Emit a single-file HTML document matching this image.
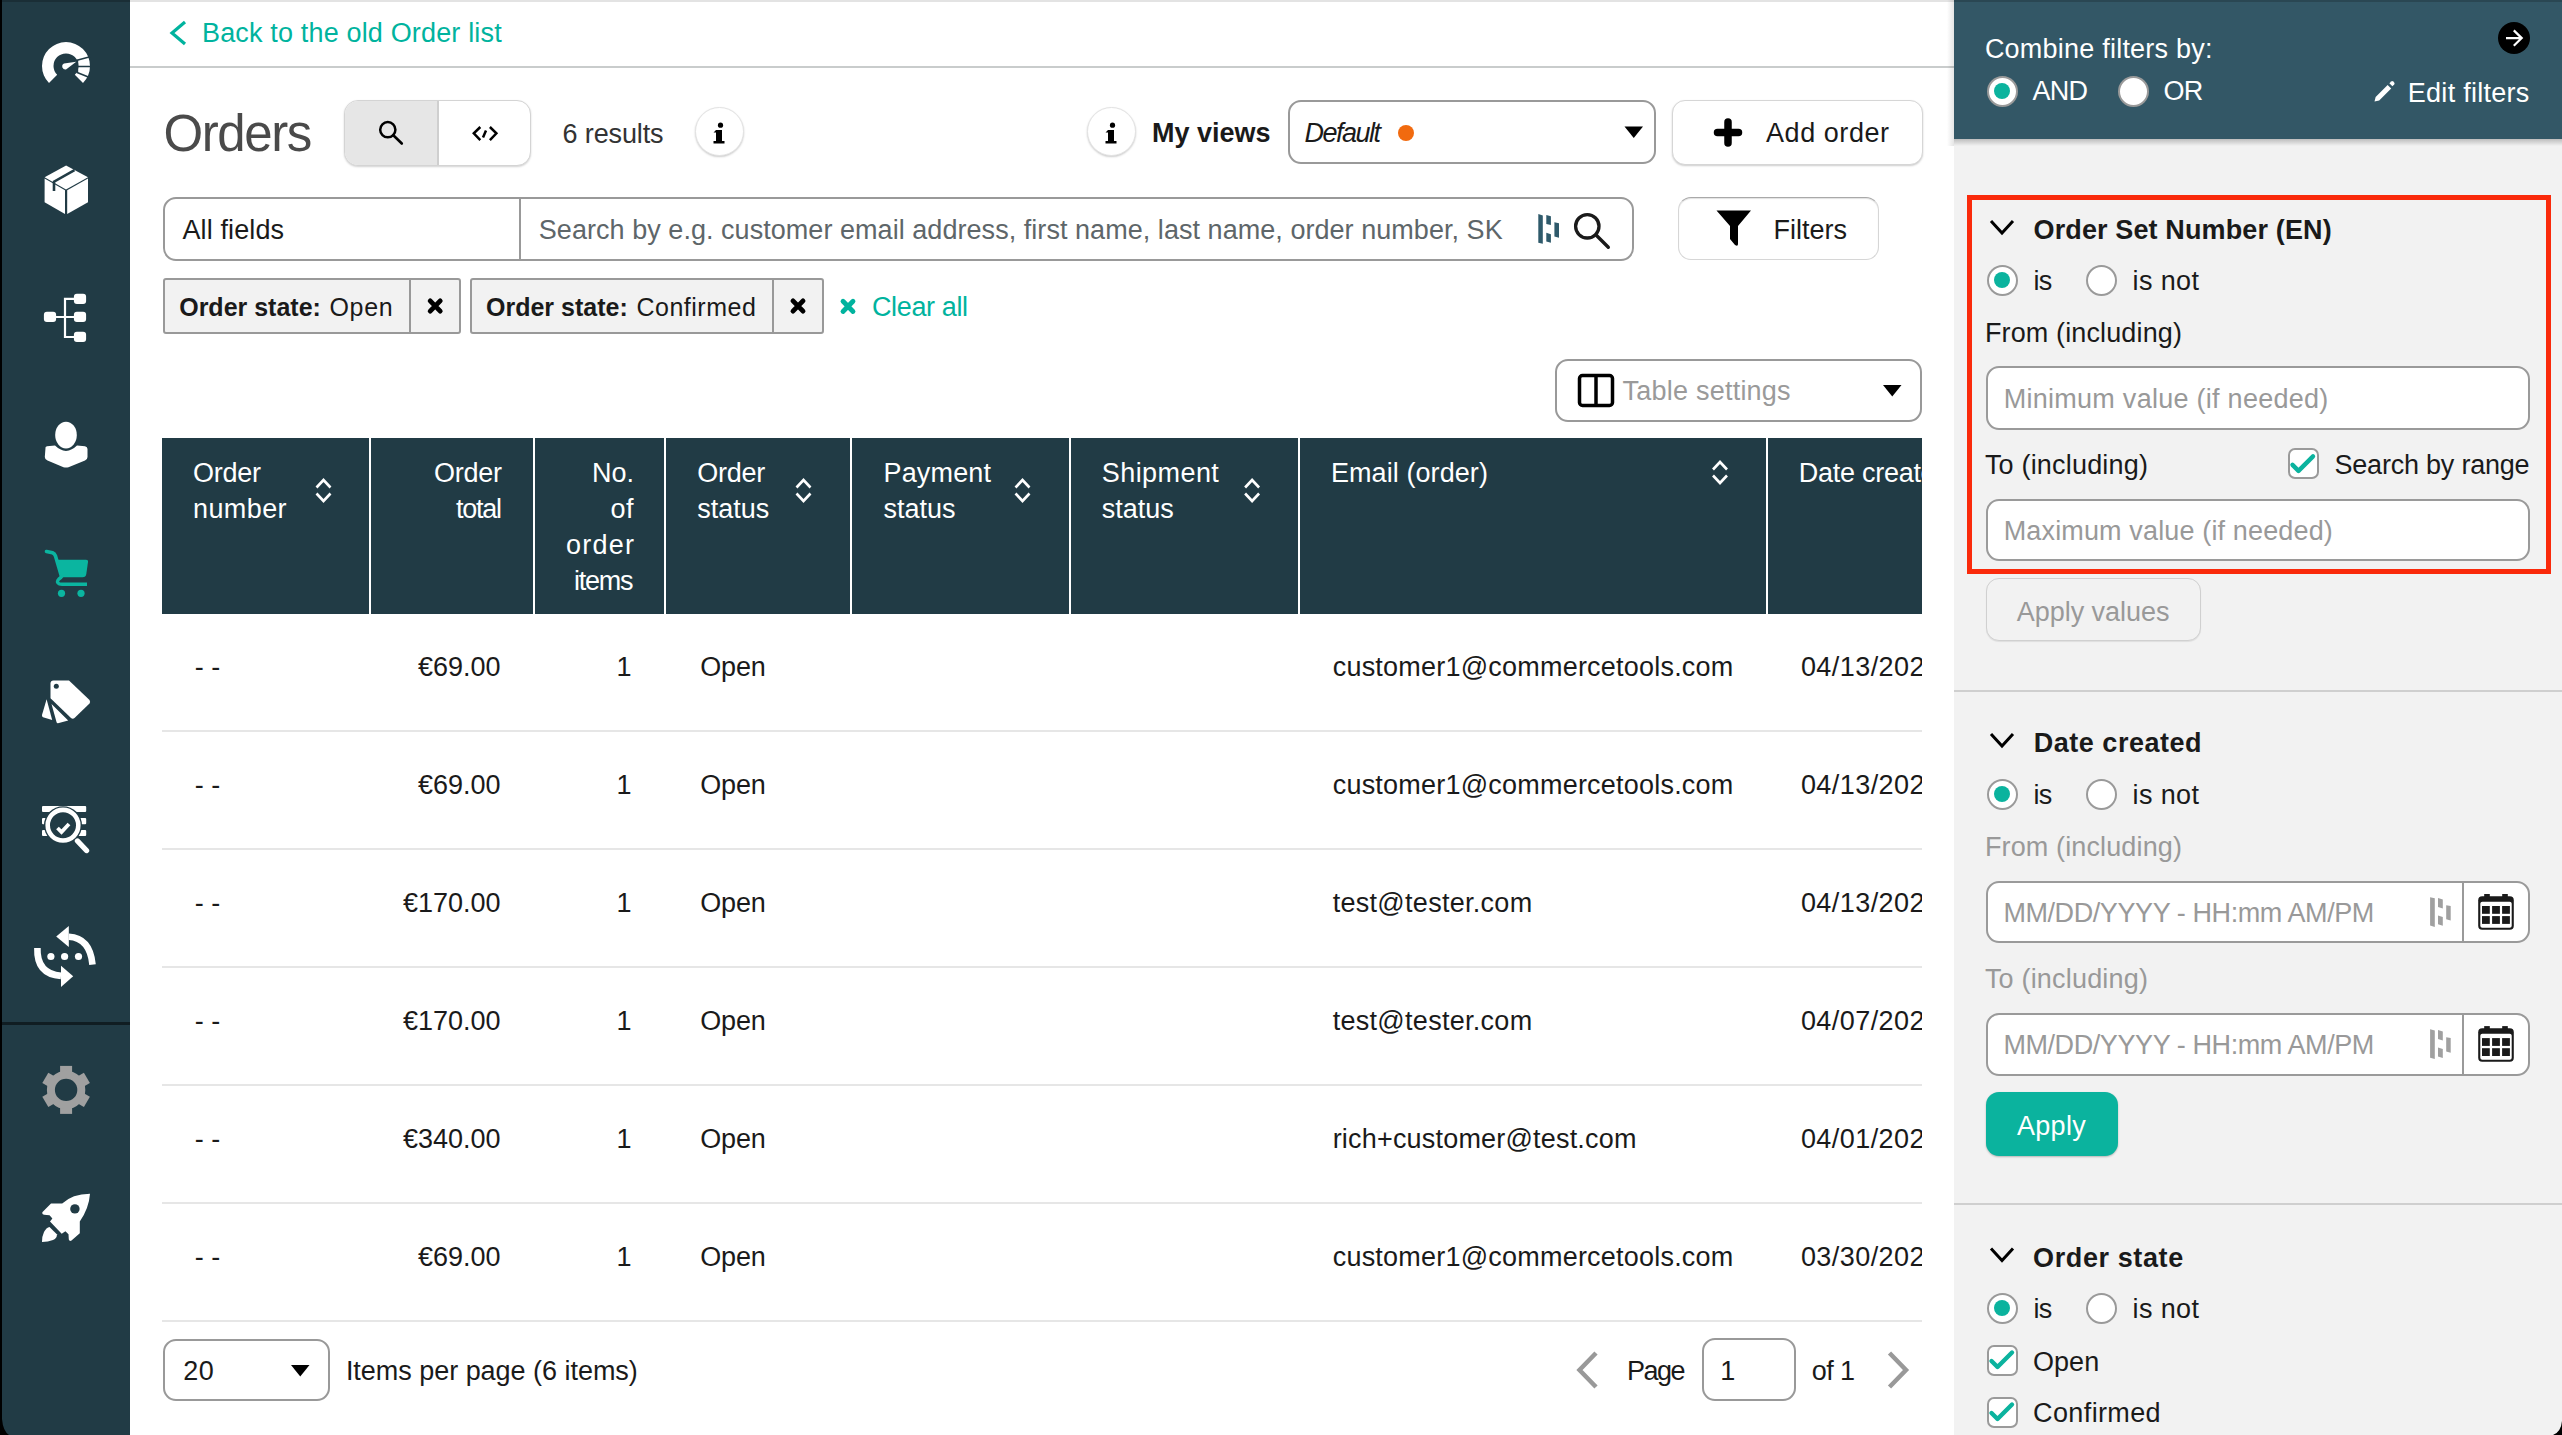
<!DOCTYPE html>
<html><head><meta charset="utf-8"><title>Orders</title>
<style>
html,body{margin:0;padding:0;}
body{width:2562px;height:1435px;overflow:hidden;position:relative;background:#fff;font-family:"Liberation Sans",sans-serif;}
.t{position:absolute;white-space:pre;}
.b{position:absolute;box-sizing:border-box;}
svg{position:absolute;overflow:visible;}
</style></head><body>
<div class="b" style="left:0.0px;top:0.0px;width:2.0px;height:1435.0px;background:#000;"></div>
<div class="b" style="left:2.0px;top:0.0px;width:128.0px;height:1435.0px;background:#213b45;"></div>
<div class="b" style="left:2.0px;top:1022.0px;width:128.0px;height:3.0px;background:#101d22;"></div>
<div class="b" style="left:130.0px;top:66.0px;width:1824.0px;height:2.0px;background:#c9cccc;"></div>
<div class="b" style="left:130.0px;top:0.0px;width:1824.0px;height:2.0px;background:#e3e3e3;"></div>
<div class="b" style="left:2.0px;top:0.0px;width:128.0px;height:2.0px;background:#1a2e36;"></div>
<svg style="left:0;top:0" width="2562" height="70"><path d="M185 22 L172 33 L185 44" fill="none" stroke="#00b39e" stroke-width="3.2" stroke-linecap="butt"/></svg>
<span id="t1" class="t" style="top:19.94px;left:202.00px;font-size:27px;line-height:27px;color:#00b39e;letter-spacing:0.160px;">Back to the old Order list</span>
<span id="t2" class="t" style="top:108.32px;left:163.50px;font-size:51px;line-height:51px;color:#4a4a4a;letter-spacing:-1.400px;">Orders</span>
<div class="b" style="left:344.0px;top:100.0px;width:187.0px;height:66.0px;border:1px solid #d4d4d4;border-radius:14px;background:#fff;box-shadow:0 1px 2px rgba(0,0,0,0.18);"></div>
<div class="b" style="left:345.0px;top:101.0px;width:93.0px;height:64.0px;background:#e6e6e6;border-radius:13px 0 0 13px;"></div>
<div class="b" style="left:437.0px;top:101.0px;width:2.0px;height:64.0px;background:#cfcfcf;"></div>
<svg style="left:0;top:0" width="600" height="200"><circle cx="387.8" cy="129.7" r="7.6" fill="none" stroke="#000" stroke-width="2.5"/><path d="M393.3 135.2 L401.8 143.5" stroke="#000" stroke-width="2.6" stroke-linecap="round"/><path d="M480.3 127 L473.8 133.4 L480.3 140.2 M489.9 127 L496.4 133.4 L489.9 140.2 M486 130.5 L483 137.6" fill="none" stroke="#000" stroke-width="2.5"/></svg>
<span id="t3" class="t" style="top:121.14px;left:562.50px;font-size:27px;line-height:27px;color:#333;letter-spacing:-0.125px;">6 results</span>
<div class="b" style="left:694.5px;top:107.0px;width:49.0px;height:49.0px;border-radius:50%;background:#fff;border:1px solid #e3e3e3;box-shadow:0 1px 2px rgba(0,0,0,0.2);"></div>
<svg style="left:0;top:0" width="1200" height="200"><circle cx="720.5" cy="125.2" r="2.6" fill="#000"/><path d="M716.0 130 h6 v11 h2.5 v2.6 h-11 v-2.6 h2.5 v-8.4 h-2.5 z" fill="#000"/></svg>
<div class="b" style="left:1086.5px;top:107.0px;width:49.0px;height:49.0px;border-radius:50%;background:#fff;border:1px solid #e3e3e3;box-shadow:0 1px 2px rgba(0,0,0,0.2);"></div>
<svg style="left:0;top:0" width="1200" height="200"><circle cx="1112.5" cy="125.2" r="2.6" fill="#000"/><path d="M1108.0 130 h6 v11 h2.5 v2.6 h-11 v-2.6 h2.5 v-8.4 h-2.5 z" fill="#000"/></svg>
<span id="t4" class="t" style="top:119.64px;left:1152.00px;font-size:27px;line-height:27px;color:#1a1a1a;font-weight:700;">My views</span>
<div class="b" style="left:1288.0px;top:100.0px;width:368.0px;height:64.0px;border:2px solid #999999;border-radius:13px;background:#fff;"></div>
<span id="t5" class="t" style="top:119.64px;left:1304.50px;font-size:27px;line-height:27px;color:#1a1a1a;font-style:italic;letter-spacing:-1.500px;">Default</span>
<div class="b" style="left:1398.0px;top:125.0px;width:16.0px;height:16.0px;border-radius:50%;background:#f16a0f;"></div>
<svg style="left:0;top:0" width="2000" height="450"><path d="M1624.5 126.5 L1643 126.5 L1633.75 138 Z" fill="#000"/><path d="M491 224 L509.5 224 L500.25 235.5 Z" fill="#000"/></svg>
<div class="b" style="left:1671.5px;top:100.0px;width:251.0px;height:65.0px;border:1px solid #d6d6d6;border-radius:13px;background:#fff;box-shadow:0 1px 2px rgba(0,0,0,0.2);"></div>
<svg style="left:0;top:0" width="2000" height="200"><path d="M1728 122 V143 M1717.5 132.5 H1738.5" stroke="#000" stroke-width="7.5" stroke-linecap="round"/></svg>
<span id="t6" class="t" style="top:119.94px;left:1766.00px;font-size:27px;line-height:27px;color:#1a1a1a;letter-spacing:0.562px;">Add order</span>
<div class="b" style="left:162.5px;top:197.0px;width:358.5px;height:64.0px;border:2px solid #999999;border-radius:13px 0 0 13px;background:#fff;"></div>
<div class="b" style="left:519.0px;top:197.0px;width:1115.0px;height:64.0px;border:2px solid #999999;border-radius:0 13px 13px 0;background:#fff;"></div>
<span id="t7" class="t" style="top:217.14px;left:182.50px;font-size:27px;line-height:27px;color:#1a1a1a;letter-spacing:0.111px;">All fields</span>
<span id="t8" class="t" style="top:216.94px;left:538.80px;font-size:27px;line-height:27px;color:#5e6669;letter-spacing:0.045px;">Search by e.g. customer email address, first name, last name, order number, SK</span>
<svg style="left:0;top:0" width="2000" height="300"><path d="M1538.3 214.1 L1542.8 215.5 L1542.8 243.8 L1538.3 242.8 Z" fill="#2f5a6b"/><path d="M1546.3 215 L1550.9 216.2 L1550.9 225 L1546.3 224 Z M1546.3 232.7 L1550.9 234.2 L1550.9 242.8 L1546.3 241.5 Z" fill="#2f5a6b"/><path d="M1554.4 222.2 L1559 223.3 L1559 237.7 L1554.4 236.6 Z" fill="#2f5a6b"/><circle cx="1587.3" cy="226.3" r="11.7" fill="none" stroke="#1a1a1a" stroke-width="3.3"/><path d="M1595.8 234.8 L1608.3 247.3" stroke="#1a1a1a" stroke-width="3.4" stroke-linecap="round"/></svg>
<div class="b" style="left:1678.0px;top:197.0px;width:201.0px;height:63.0px;border:1px solid #d6d6d6;border-top-color:#a9a9a9;border-radius:13px;background:#fff;box-shadow:inset 0 1px 1px rgba(0,0,0,0.12);"></div>
<svg style="left:0;top:0" width="2000" height="300"><path d="M1716.5 210.5 H1751 L1738 226 V244 Q1738 247 1735 245 L1730 239 V226 Z" fill="#000"/></svg>
<span id="t9" class="t" style="top:216.64px;left:1773.50px;font-size:27px;line-height:27px;color:#1a1a1a;">Filters</span>
<div class="b" style="left:162.5px;top:277.5px;width:298.0px;height:56.5px;border:2px solid #999999;border-radius:3px;background:#f2f2f2;"></div>
<div class="b" style="left:409.0px;top:279.0px;width:2.0px;height:54.0px;background:#999999;"></div>
<div class="b" style="left:469.5px;top:277.5px;width:354.0px;height:56.5px;border:2px solid #999999;border-radius:3px;background:#f2f2f2;"></div>
<div class="b" style="left:772.0px;top:279.0px;width:2.0px;height:54.0px;background:#999999;"></div>
<span id="t10" class="t" style="top:294.83px;left:179.20px;font-size:25px;line-height:25px;color:#1a1a1a;font-weight:700;">Order state:</span>
<span id="t11" class="t" style="top:294.83px;left:329.50px;font-size:25px;line-height:25px;color:#1a1a1a;letter-spacing:0.667px;">Open</span>
<span id="t12" class="t" style="top:294.83px;left:486.00px;font-size:25px;line-height:25px;color:#1a1a1a;font-weight:700;">Order state:</span>
<span id="t13" class="t" style="top:294.83px;left:636.50px;font-size:25px;line-height:25px;color:#1a1a1a;letter-spacing:0.500px;">Confirmed</span>
<svg style="left:0;top:0" width="1000" height="400"><path d="M430.2 300.9 L440.2 311.1 M440.2 300.9 L430.2 311.1" stroke="#000" stroke-width="4.9" stroke-linecap="round"/><path d="M793 300.9 L803 311.1 M803 300.9 L793 311.1" stroke="#000" stroke-width="4.9" stroke-linecap="round"/><path d="M843 301.3 L853 311.5 M853 301.3 L843 311.5" stroke="#00b39e" stroke-width="4.8" stroke-linecap="round"/></svg>
<span id="t14" class="t" style="top:293.64px;left:872.00px;font-size:27px;line-height:27px;color:#00b39e;letter-spacing:-0.375px;">Clear all</span>
<div class="b" style="left:1555.0px;top:358.5px;width:366.5px;height:63.0px;border:2px solid #999999;border-radius:13px;background:#fff;"></div>
<svg style="left:0;top:0" width="2000" height="450"><rect x="1579.5" y="375.5" width="33" height="30" rx="3" fill="none" stroke="#000" stroke-width="3.5"/><path d="M1596 376 V405" stroke="#000" stroke-width="3.5"/></svg>
<span id="t15" class="t" style="top:378.14px;left:1622.50px;font-size:27px;line-height:27px;color:#9a9a9a;letter-spacing:0.231px;">Table settings</span>
<svg style="left:0;top:0" width="2000" height="450"><path d="M1883 385 L1901.5 385 L1892.25 396.5 Z" fill="#000"/></svg>
<div class="b" style="left:162.0px;top:437.5px;width:1760.0px;height:176.0px;background:#213b45;"></div>
<div class="b" style="left:368.5px;top:437.5px;width:2.0px;height:176.0px;background:#fff;"></div>
<div class="b" style="left:532.8px;top:437.5px;width:2.0px;height:176.0px;background:#fff;"></div>
<div class="b" style="left:664.4px;top:437.5px;width:2.0px;height:176.0px;background:#fff;"></div>
<div class="b" style="left:849.8px;top:437.5px;width:2.0px;height:176.0px;background:#fff;"></div>
<div class="b" style="left:1069.3px;top:437.5px;width:2.0px;height:176.0px;background:#fff;"></div>
<div class="b" style="left:1297.7px;top:437.5px;width:2.0px;height:176.0px;background:#fff;"></div>
<div class="b" style="left:1765.9px;top:437.5px;width:2.0px;height:176.0px;background:#fff;"></div>
<span id="t16" class="t" style="top:460.14px;left:193.00px;font-size:27px;line-height:27px;color:#ffffff;letter-spacing:-0.250px;">Order</span>
<span id="t17" class="t" style="top:496.14px;left:193.00px;font-size:27px;line-height:27px;color:#ffffff;letter-spacing:0.400px;">number</span>
<span id="t18" class="t" style="top:460.14px;right:2060.25px;font-size:27px;line-height:27px;color:#ffffff;letter-spacing:-0.250px;">Order</span>
<span id="t19" class="t" style="top:496.14px;right:2061.22px;font-size:27px;line-height:27px;color:#ffffff;letter-spacing:-1.250px;">total</span>
<span id="t20" class="t" style="top:460.14px;right:1927.98px;font-size:27px;line-height:27px;color:#ffffff;">No.</span>
<span id="t21" class="t" style="top:496.14px;right:1927.98px;font-size:27px;line-height:27px;color:#ffffff;letter-spacing:0.500px;">of</span>
<span id="t22" class="t" style="top:532.14px;right:1926.73px;font-size:27px;line-height:27px;color:#ffffff;letter-spacing:1.250px;">order</span>
<span id="t23" class="t" style="top:568.14px;right:1929.75px;font-size:27px;line-height:27px;color:#ffffff;letter-spacing:-1.250px;">items</span>
<span id="t24" class="t" style="top:460.14px;left:697.30px;font-size:27px;line-height:27px;color:#ffffff;letter-spacing:-0.250px;">Order</span>
<span id="t25" class="t" style="top:496.14px;left:697.30px;font-size:27px;line-height:27px;color:#ffffff;">status</span>
<span id="t26" class="t" style="top:460.14px;left:883.50px;font-size:27px;line-height:27px;color:#ffffff;letter-spacing:0.167px;">Payment</span>
<span id="t27" class="t" style="top:496.14px;left:883.50px;font-size:27px;line-height:27px;color:#ffffff;">status</span>
<span id="t28" class="t" style="top:460.14px;left:1101.80px;font-size:27px;line-height:27px;color:#ffffff;letter-spacing:0.429px;">Shipment</span>
<span id="t29" class="t" style="top:496.14px;left:1101.80px;font-size:27px;line-height:27px;color:#ffffff;">status</span>
<span id="t30" class="t" style="top:460.14px;left:1330.90px;font-size:27px;line-height:27px;color:#ffffff;letter-spacing:0.083px;">Email (order)</span>
<div style="position:absolute;left:1767.9px;top:437.5px;width:154.1px;height:176px;overflow:hidden;">
<span id="t31" class="t" style="top:22.64px;left:30.90px;font-size:27px;line-height:27px;color:#ffffff;letter-spacing:-0.273px;">Date created</span>
</div>
<svg style="left:0;top:0" width="2000" height="700"><path d="M316.5 487.5 L323.5 480.0 L330.5 487.5 M316.5 493.5 L323.5 501.0 L330.5 493.5" fill="none" stroke="#fff" stroke-width="2.6"/><path d="M796.5 487.5 L803.5 480.0 L810.5 487.5 M796.5 493.5 L803.5 501.0 L810.5 493.5" fill="none" stroke="#fff" stroke-width="2.6"/><path d="M1015.5 487.5 L1022.5 480.0 L1029.5 487.5 M1015.5 493.5 L1022.5 501.0 L1029.5 493.5" fill="none" stroke="#fff" stroke-width="2.6"/><path d="M1245.1 487.5 L1252.1 480.0 L1259.1 487.5 M1245.1 493.5 L1252.1 501.0 L1259.1 493.5" fill="none" stroke="#fff" stroke-width="2.6"/><path d="M1713.0 469.5 L1720.0 462.0 L1727.0 469.5 M1713.0 475.5 L1720.0 483.0 L1727.0 475.5" fill="none" stroke="#fff" stroke-width="2.6"/></svg>
<span id="t32" class="t" style="top:653.64px;left:194.80px;font-size:27px;line-height:27px;color:#1a1a1a;">- -</span>
<span id="t33" class="t" style="top:653.64px;right:2061.42px;font-size:27px;line-height:27px;color:#1a1a1a;">€69.00</span>
<span id="t34" class="t" style="top:653.64px;right:1930.48px;font-size:27px;line-height:27px;color:#1a1a1a;">1</span>
<span id="t35" class="t" style="top:653.64px;left:700.20px;font-size:27px;line-height:27px;color:#1a1a1a;letter-spacing:-0.133px;">Open</span>
<span id="t36" class="t" style="top:653.64px;left:1332.70px;font-size:27px;line-height:27px;color:#1a1a1a;letter-spacing:0.215px;">customer1@commercetools.com</span>
<div style="position:absolute;left:1767.9px;top:635.5px;width:154.1px;height:60px;overflow:hidden;">
<span id="t37" class="t" style="top:18.14px;left:33.00px;font-size:27px;line-height:27px;color:#1a1a1a;letter-spacing:0.444px;">04/13/2023</span>
</div>
<div class="b" style="left:162.0px;top:729.5px;width:1760.0px;height:2.0px;background:#e6e6e6;"></div>
<span id="t38" class="t" style="top:771.64px;left:194.80px;font-size:27px;line-height:27px;color:#1a1a1a;">- -</span>
<span id="t39" class="t" style="top:771.64px;right:2061.42px;font-size:27px;line-height:27px;color:#1a1a1a;">€69.00</span>
<span id="t40" class="t" style="top:771.64px;right:1930.48px;font-size:27px;line-height:27px;color:#1a1a1a;">1</span>
<span id="t41" class="t" style="top:771.64px;left:700.20px;font-size:27px;line-height:27px;color:#1a1a1a;letter-spacing:-0.133px;">Open</span>
<span id="t42" class="t" style="top:771.64px;left:1332.70px;font-size:27px;line-height:27px;color:#1a1a1a;letter-spacing:0.215px;">customer1@commercetools.com</span>
<div style="position:absolute;left:1767.9px;top:753.5px;width:154.1px;height:60px;overflow:hidden;">
<span id="t43" class="t" style="top:18.14px;left:33.00px;font-size:27px;line-height:27px;color:#1a1a1a;letter-spacing:0.444px;">04/13/2023</span>
</div>
<div class="b" style="left:162.0px;top:847.5px;width:1760.0px;height:2.0px;background:#e6e6e6;"></div>
<span id="t44" class="t" style="top:889.64px;left:194.80px;font-size:27px;line-height:27px;color:#1a1a1a;">- -</span>
<span id="t45" class="t" style="top:889.64px;right:2061.41px;font-size:27px;line-height:27px;color:#1a1a1a;">€170.00</span>
<span id="t46" class="t" style="top:889.64px;right:1930.48px;font-size:27px;line-height:27px;color:#1a1a1a;">1</span>
<span id="t47" class="t" style="top:889.64px;left:700.20px;font-size:27px;line-height:27px;color:#1a1a1a;letter-spacing:-0.133px;">Open</span>
<span id="t48" class="t" style="top:889.64px;left:1332.70px;font-size:27px;line-height:27px;color:#1a1a1a;letter-spacing:0.286px;">test@tester.com</span>
<div style="position:absolute;left:1767.9px;top:871.5px;width:154.1px;height:60px;overflow:hidden;">
<span id="t49" class="t" style="top:18.14px;left:33.00px;font-size:27px;line-height:27px;color:#1a1a1a;letter-spacing:0.444px;">04/13/2023</span>
</div>
<div class="b" style="left:162.0px;top:965.5px;width:1760.0px;height:2.0px;background:#e6e6e6;"></div>
<span id="t50" class="t" style="top:1007.64px;left:194.80px;font-size:27px;line-height:27px;color:#1a1a1a;">- -</span>
<span id="t51" class="t" style="top:1007.64px;right:2061.41px;font-size:27px;line-height:27px;color:#1a1a1a;">€170.00</span>
<span id="t52" class="t" style="top:1007.64px;right:1930.48px;font-size:27px;line-height:27px;color:#1a1a1a;">1</span>
<span id="t53" class="t" style="top:1007.64px;left:700.20px;font-size:27px;line-height:27px;color:#1a1a1a;letter-spacing:-0.133px;">Open</span>
<span id="t54" class="t" style="top:1007.64px;left:1332.70px;font-size:27px;line-height:27px;color:#1a1a1a;letter-spacing:0.286px;">test@tester.com</span>
<div style="position:absolute;left:1767.9px;top:989.5px;width:154.1px;height:60px;overflow:hidden;">
<span id="t55" class="t" style="top:18.14px;left:33.00px;font-size:27px;line-height:27px;color:#1a1a1a;letter-spacing:0.444px;">04/07/2023</span>
</div>
<div class="b" style="left:162.0px;top:1083.5px;width:1760.0px;height:2.0px;background:#e6e6e6;"></div>
<span id="t56" class="t" style="top:1125.64px;left:194.80px;font-size:27px;line-height:27px;color:#1a1a1a;">- -</span>
<span id="t57" class="t" style="top:1125.64px;right:2061.41px;font-size:27px;line-height:27px;color:#1a1a1a;">€340.00</span>
<span id="t58" class="t" style="top:1125.64px;right:1930.48px;font-size:27px;line-height:27px;color:#1a1a1a;">1</span>
<span id="t59" class="t" style="top:1125.64px;left:700.20px;font-size:27px;line-height:27px;color:#1a1a1a;letter-spacing:-0.133px;">Open</span>
<span id="t60" class="t" style="top:1125.64px;left:1332.70px;font-size:27px;line-height:27px;color:#1a1a1a;letter-spacing:0.190px;">rich+customer@test.com</span>
<div style="position:absolute;left:1767.9px;top:1107.5px;width:154.1px;height:60px;overflow:hidden;">
<span id="t61" class="t" style="top:18.14px;left:33.00px;font-size:27px;line-height:27px;color:#1a1a1a;letter-spacing:0.444px;">04/01/2023</span>
</div>
<div class="b" style="left:162.0px;top:1201.5px;width:1760.0px;height:2.0px;background:#e6e6e6;"></div>
<span id="t62" class="t" style="top:1243.64px;left:194.80px;font-size:27px;line-height:27px;color:#1a1a1a;">- -</span>
<span id="t63" class="t" style="top:1243.64px;right:2061.42px;font-size:27px;line-height:27px;color:#1a1a1a;">€69.00</span>
<span id="t64" class="t" style="top:1243.64px;right:1930.48px;font-size:27px;line-height:27px;color:#1a1a1a;">1</span>
<span id="t65" class="t" style="top:1243.64px;left:700.20px;font-size:27px;line-height:27px;color:#1a1a1a;letter-spacing:-0.133px;">Open</span>
<span id="t66" class="t" style="top:1243.64px;left:1332.70px;font-size:27px;line-height:27px;color:#1a1a1a;letter-spacing:0.215px;">customer1@commercetools.com</span>
<div style="position:absolute;left:1767.9px;top:1225.5px;width:154.1px;height:60px;overflow:hidden;">
<span id="t67" class="t" style="top:18.14px;left:33.00px;font-size:27px;line-height:27px;color:#1a1a1a;letter-spacing:0.444px;">03/30/2023</span>
</div>
<div class="b" style="left:162.0px;top:1319.5px;width:1760.0px;height:2.0px;background:#e6e6e6;"></div>
<div class="b" style="left:162.5px;top:1338.8px;width:167.0px;height:62.7px;border:2px solid #999999;border-radius:13px;background:#fff;"></div>
<span id="t68" class="t" style="top:1357.74px;left:183.30px;font-size:27px;line-height:27px;color:#1a1a1a;letter-spacing:0.500px;">20</span>
<svg style="left:0;top:0" width="2000" height="1435"><path d="M291 1365 L309.5 1365 L300.25 1376.5 Z" fill="#000"/><path d="M1596 1353 L1579.5 1370 L1596 1387" fill="none" stroke="#999" stroke-width="4.5"/><path d="M1889.5 1353 L1906 1370 L1889.5 1387" fill="none" stroke="#999" stroke-width="4.5"/></svg>
<span id="t69" class="t" style="top:1358.14px;left:345.90px;font-size:27px;line-height:27px;color:#1a1a1a;letter-spacing:-0.030px;">Items per page (6 items)</span>
<span id="t70" class="t" style="top:1358.14px;left:1626.90px;font-size:27px;line-height:27px;color:#1a1a1a;letter-spacing:-1.467px;">Page</span>
<div class="b" style="left:1702.0px;top:1338.2px;width:93.5px;height:63.3px;border:2px solid #999999;border-radius:13px;background:#fff;"></div>
<span id="t71" class="t" style="top:1358.14px;left:1720.20px;font-size:27px;line-height:27px;color:#1a1a1a;">1</span>
<span id="t72" class="t" style="top:1358.14px;left:1811.80px;font-size:27px;line-height:27px;color:#1a1a1a;letter-spacing:-0.567px;">of 1</span>
<div class="b" style="left:1947.0px;top:0.0px;width:7.0px;height:146.0px;background:linear-gradient(to right, rgba(0,0,0,0), rgba(0,0,0,0.10));"></div>
<div class="b" style="left:1954.0px;top:0.0px;width:608.0px;height:1435.0px;background:#f2f2f2;"></div>
<div class="b" style="left:1954.0px;top:138.5px;width:608.0px;height:7.5px;background:linear-gradient(to bottom, rgba(0,0,0,0.22), rgba(0,0,0,0));"></div>
<div class="b" style="left:1954.0px;top:0.0px;width:608.0px;height:138.5px;background:#335766;"></div>
<div class="b" style="left:1954.0px;top:0.0px;width:608.0px;height:2.0px;background:#2a4753;"></div>
<span id="t73" class="t" style="top:36.34px;left:1984.90px;font-size:27px;line-height:27px;color:#fff;letter-spacing:0.222px;">Combine filters by:</span>
<svg style="left:0;top:0" width="2562" height="1435"><circle cx="2514" cy="38" r="16" fill="#000"/><path d="M2506 38.1 H2521.5 M2513.8 30.4 L2521.7 38.1 L2513.8 45.8" fill="none" stroke="#fff" stroke-width="2.2"/></svg>
<div class="b" style="left:1986.5px;top:75.5px;width:31.0px;height:31.0px;border-radius:50%;background:#fff;border:2px solid #9a9a9a;"></div>
<div class="b" style="left:1994.0px;top:83.0px;width:16.0px;height:16.0px;border-radius:50%;background:#0bb39e;"></div>
<div class="b" style="left:2117.5px;top:75.5px;width:31.0px;height:31.0px;border-radius:50%;background:#fff;border:2px solid #9a9a9a;"></div>
<span id="t74" class="t" style="top:78.14px;left:2032.50px;font-size:27px;line-height:27px;color:#fff;letter-spacing:-0.800px;">AND</span>
<span id="t75" class="t" style="top:78.14px;left:2163.50px;font-size:27px;line-height:27px;color:#fff;letter-spacing:-0.800px;">OR</span>
<svg style="left:0;top:0" width="2562" height="200"><path d="M2374.5 101.6 L2375.6 97 L2387.6 85 L2391.2 88.6 L2379.2 100.5 Z" fill="#fff"/><path d="M2389.4 83.2 L2391.2 81.4 Q2392.2 80.6 2393.2 81.4 L2394.2 82.4 Q2395 83.4 2394.2 84.4 L2392.4 86.2 Z" fill="#fff"/></svg>
<span id="t76" class="t" style="top:79.74px;left:2407.80px;font-size:27px;line-height:27px;color:#fff;letter-spacing:0.273px;">Edit filters</span>
<div class="b" style="left:1967.0px;top:194.5px;width:583.5px;height:379.0px;border:5px solid #fa2a0b;"></div>
<svg style="left:0;top:0" width="2562" height="1435"><path d="M1991.0 221.0 L2002.0 233.0 L2013.0 221.0" fill="none" stroke="#000" stroke-width="3"/></svg>
<span id="t77" class="t" style="top:216.54px;left:2033.50px;font-size:27px;line-height:27px;color:#1a1a1a;font-weight:700;letter-spacing:0.130px;">Order Set Number (EN)</span>
<div class="b" style="left:1986.5px;top:264.5px;width:31.0px;height:31.0px;border-radius:50%;background:#fff;border:2px solid #9a9a9a;"></div>
<div class="b" style="left:1994.0px;top:272.0px;width:16.0px;height:16.0px;border-radius:50%;background:#0bb39e;"></div>
<div class="b" style="left:2085.5px;top:264.5px;width:31.0px;height:31.0px;border-radius:50%;background:#fff;border:2px solid #9a9a9a;"></div>
<span id="t78" class="t" style="top:268.14px;left:2033.50px;font-size:27px;line-height:27px;color:#1a1a1a;letter-spacing:-0.800px;">is</span>
<span id="t79" class="t" style="top:268.14px;left:2132.50px;font-size:27px;line-height:27px;color:#1a1a1a;letter-spacing:0.400px;">is not</span>
<span id="t80" class="t" style="top:319.94px;left:1984.90px;font-size:27px;line-height:27px;color:#1a1a1a;letter-spacing:0.133px;">From (including)</span>
<div class="b" style="left:1986.0px;top:366.0px;width:543.5px;height:63.5px;border:2px solid #9a9a9a;border-radius:13px;background:#fff;"></div>
<span id="t81" class="t" style="top:386.04px;left:2003.70px;font-size:27px;line-height:27px;color:#999;letter-spacing:0.271px;">Minimum value (if needed)</span>
<span id="t82" class="t" style="top:452.44px;left:1984.90px;font-size:27px;line-height:27px;color:#1a1a1a;letter-spacing:0.192px;">To (including)</span>
<div class="b" style="left:2287.5px;top:448.4px;width:31.0px;height:31.0px;border:2px solid #9a9a9a;border-radius:7px;background:#fff;"></div>
<svg style="left:0;top:0" width="2562" height="1435"><path d="M2292.5 464.9 L2298.5 470.9 L2313.0 456.4" fill="none" stroke="#0bb39e" stroke-width="4.4" stroke-linecap="round" stroke-linejoin="round"/></svg>
<span id="t83" class="t" style="top:452.44px;left:2334.50px;font-size:27px;line-height:27px;color:#1a1a1a;letter-spacing:-0.214px;">Search by range</span>
<div class="b" style="left:1986.0px;top:498.6px;width:543.5px;height:62.9px;border:2px solid #9a9a9a;border-radius:13px;background:#fff;"></div>
<span id="t84" class="t" style="top:518.44px;left:2003.70px;font-size:27px;line-height:27px;color:#999;letter-spacing:0.146px;">Maximum value (if needed)</span>
<div class="b" style="left:1986.4px;top:578.4px;width:214.6px;height:62.8px;border:1px solid #d0d0d0;border-radius:13px;background:#f2f2f2;box-shadow:0 1px 1px rgba(0,0,0,0.08);"></div>
<span id="t85" class="t" style="top:598.64px;left:2016.80px;font-size:27px;line-height:27px;color:#999;letter-spacing:-0.036px;">Apply values</span>
<div class="b" style="left:1954.0px;top:689.8px;width:608.0px;height:2.0px;background:#cfcfcf;"></div>
<svg style="left:0;top:0" width="2562" height="1435"><path d="M1991.0 734.0 L2002.0 746.0 L2013.0 734.0" fill="none" stroke="#000" stroke-width="3"/></svg>
<span id="t86" class="t" style="top:729.74px;left:2033.80px;font-size:27px;line-height:27px;color:#1a1a1a;font-weight:700;letter-spacing:0.509px;">Date created</span>
<div class="b" style="left:1986.5px;top:778.5px;width:31.0px;height:31.0px;border-radius:50%;background:#fff;border:2px solid #9a9a9a;"></div>
<div class="b" style="left:1994.0px;top:786.0px;width:16.0px;height:16.0px;border-radius:50%;background:#0bb39e;"></div>
<div class="b" style="left:2085.5px;top:778.5px;width:31.0px;height:31.0px;border-radius:50%;background:#fff;border:2px solid #9a9a9a;"></div>
<span id="t87" class="t" style="top:782.14px;left:2033.50px;font-size:27px;line-height:27px;color:#1a1a1a;letter-spacing:-0.800px;">is</span>
<span id="t88" class="t" style="top:782.14px;left:2132.50px;font-size:27px;line-height:27px;color:#1a1a1a;letter-spacing:0.400px;">is not</span>
<span id="t89" class="t" style="top:834.44px;left:1984.90px;font-size:27px;line-height:27px;color:#999;letter-spacing:0.133px;">From (including)</span>
<div class="b" style="left:1986.0px;top:880.9px;width:543.5px;height:62.5px;border:2px solid #9a9a9a;border-radius:13px;background:#fff;"></div>
<div class="b" style="left:2462.0px;top:881.9px;width:2.0px;height:60.5px;background:#9a9a9a;"></div>
<span id="t90" class="t" style="top:900.34px;left:2003.40px;font-size:27px;line-height:27px;color:#999;letter-spacing:-0.417px;">MM/DD/YYYY - HH:mm AM/PM</span>
<svg style="left:0;top:0" width="2562" height="1435"><path d="M2430.1 897.2 L2434.8 898.3 L2434.8 926.9 L2430.1 925.6 Z M2438.0 897.9 L2442.8 899.4 L2442.8 908.4 L2438.0 906.9 Z M2438.0 915.5 L2442.8 917.0 L2442.8 925.8 L2438.0 924.3 Z M2446.2 905.2 L2450.7 906.0 L2450.7 920.6 L2446.2 919.3 Z " fill="#a0a0a0"/><rect x="2478.2" y="896.2" width="35.6" height="33.5" rx="4" fill="#1a1a1a"/><rect x="2480.3" y="901.7" width="31.4" height="26" rx="2" fill="#fff"/><rect x="2484.2" y="894.0" width="5.6" height="3" fill="#1a1a1a"/><rect x="2502.2" y="894.0" width="5.6" height="3" fill="#1a1a1a"/><rect x="2482.0" y="906.0" width="7.8" height="7.8" fill="#1a1a1a"/><rect x="2492.1" y="906.0" width="7.8" height="7.8" fill="#1a1a1a"/><rect x="2502.1" y="906.0" width="7.8" height="7.8" fill="#1a1a1a"/><rect x="2482.0" y="916.1" width="7.8" height="7.8" fill="#1a1a1a"/><rect x="2492.1" y="916.1" width="7.8" height="7.8" fill="#1a1a1a"/><rect x="2502.1" y="916.1" width="7.8" height="7.8" fill="#1a1a1a"/></svg>
<span id="t91" class="t" style="top:966.14px;left:1984.90px;font-size:27px;line-height:27px;color:#999;letter-spacing:0.192px;">To (including)</span>
<div class="b" style="left:1986.0px;top:1013.0px;width:543.5px;height:62.5px;border:2px solid #9a9a9a;border-radius:13px;background:#fff;"></div>
<div class="b" style="left:2462.0px;top:1014.0px;width:2.0px;height:60.5px;background:#9a9a9a;"></div>
<span id="t92" class="t" style="top:1032.44px;left:2003.40px;font-size:27px;line-height:27px;color:#999;letter-spacing:-0.417px;">MM/DD/YYYY - HH:mm AM/PM</span>
<svg style="left:0;top:0" width="2562" height="1435"><path d="M2430.1 1029.3 L2434.8 1030.4 L2434.8 1059.0 L2430.1 1057.7 Z M2438.0 1030.0 L2442.8 1031.5 L2442.8 1040.5 L2438.0 1039.0 Z M2438.0 1047.6 L2442.8 1049.1 L2442.8 1057.9 L2438.0 1056.4 Z M2446.2 1037.3 L2450.7 1038.1 L2450.7 1052.7 L2446.2 1051.4 Z " fill="#a0a0a0"/><rect x="2478.2" y="1028.3" width="35.6" height="33.5" rx="4" fill="#1a1a1a"/><rect x="2480.3" y="1033.8" width="31.4" height="26" rx="2" fill="#fff"/><rect x="2484.2" y="1026.1" width="5.6" height="3" fill="#1a1a1a"/><rect x="2502.2" y="1026.1" width="5.6" height="3" fill="#1a1a1a"/><rect x="2482.0" y="1038.1" width="7.8" height="7.8" fill="#1a1a1a"/><rect x="2492.1" y="1038.1" width="7.8" height="7.8" fill="#1a1a1a"/><rect x="2502.1" y="1038.1" width="7.8" height="7.8" fill="#1a1a1a"/><rect x="2482.0" y="1048.2" width="7.8" height="7.8" fill="#1a1a1a"/><rect x="2492.1" y="1048.2" width="7.8" height="7.8" fill="#1a1a1a"/><rect x="2502.1" y="1048.2" width="7.8" height="7.8" fill="#1a1a1a"/></svg>
<div class="b" style="left:1986.3px;top:1092.0px;width:132.0px;height:64.2px;border-radius:13px;background:#0bb39e;box-shadow:0 1px 2px rgba(0,0,0,0.25);"></div>
<span id="t93" class="t" style="top:1112.64px;left:2016.90px;font-size:27px;line-height:27px;color:#fff;letter-spacing:0.350px;">Apply</span>
<div class="b" style="left:1954.0px;top:1203.3px;width:608.0px;height:2.0px;background:#cfcfcf;"></div>
<svg style="left:0;top:0" width="2562" height="1435"><path d="M1991.0 1248.5 L2002.0 1260.5 L2013.0 1248.5" fill="none" stroke="#000" stroke-width="3"/></svg>
<span id="t94" class="t" style="top:1244.64px;left:2033.10px;font-size:27px;line-height:27px;color:#1a1a1a;font-weight:700;letter-spacing:0.600px;">Order state</span>
<div class="b" style="left:1986.5px;top:1292.5px;width:31.0px;height:31.0px;border-radius:50%;background:#fff;border:2px solid #9a9a9a;"></div>
<div class="b" style="left:1994.0px;top:1300.0px;width:16.0px;height:16.0px;border-radius:50%;background:#0bb39e;"></div>
<div class="b" style="left:2085.5px;top:1292.5px;width:31.0px;height:31.0px;border-radius:50%;background:#fff;border:2px solid #9a9a9a;"></div>
<span id="t95" class="t" style="top:1296.14px;left:2033.50px;font-size:27px;line-height:27px;color:#1a1a1a;letter-spacing:-0.800px;">is</span>
<span id="t96" class="t" style="top:1296.14px;left:2132.50px;font-size:27px;line-height:27px;color:#1a1a1a;letter-spacing:0.400px;">is not</span>
<div class="b" style="left:1986.5px;top:1344.5px;width:31.0px;height:31.0px;border:2px solid #9a9a9a;border-radius:7px;background:#fff;"></div>
<svg style="left:0;top:0" width="2562" height="1435"><path d="M1991.5 1361.0 L1997.5 1367.0 L2012.0 1352.5" fill="none" stroke="#0bb39e" stroke-width="4.4" stroke-linecap="round" stroke-linejoin="round"/></svg>
<span id="t97" class="t" style="top:1348.64px;left:2033.10px;font-size:27px;line-height:27px;color:#1a1a1a;">Open</span>
<div class="b" style="left:1986.5px;top:1396.5px;width:31.0px;height:31.0px;border:2px solid #9a9a9a;border-radius:7px;background:#fff;"></div>
<svg style="left:0;top:0" width="2562" height="1435"><path d="M1991.5 1413.0 L1997.5 1419.0 L2012.0 1404.5" fill="none" stroke="#0bb39e" stroke-width="4.4" stroke-linecap="round" stroke-linejoin="round"/></svg>
<span id="t98" class="t" style="top:1400.14px;left:2033.10px;font-size:27px;line-height:27px;color:#1a1a1a;letter-spacing:0.375px;">Confirmed</span>
<svg style="left:0;top:0" width="2562" height="1435"><path d="M2562 1421 Q2561 1432 2553 1435 L2562 1435 Z" fill="#000"/><path d="M2 1419 Q3 1431 9 1435 L0 1435 Z" fill="#000"/></svg>
<svg style="left:0;top:0" width="130" height="1435"><path d="M49.0 83.0 A24.0 24.0 0 1 1 83.0 83.0 L74.8 74.8 A12.5 12.5 0 1 0 57.2 74.8 Z" fill="#fff"/><path d="M77 60.2 L90 56.8 M77 66.5 L91 66.5 M76.5 72.2 L89 77.3" stroke="#213b45" stroke-width="1.6"/><rect x="76" y="59.8" width="2.2" height="12.6" fill="#213b45"/><path d="M76.2 61.8 L64 63.5 A3.2 3.2 0 0 0 66 69.5 Z" fill="#fff"/><path d="M66.1 165.5 L88 177.2 L66 189.5 L44.6 177.2 Z" fill="#fff"/><path d="M44.6 178.6 L65 190.3 L65 214 L44.6 202.3 Z" fill="#fff"/><path d="M67.2 190.3 L88 178.6 L88 202.3 L67.2 214 Z" fill="#fff"/><path d="M74.5 170.2 L54 181.7 L54 191" fill="none" stroke="#213b45" stroke-width="2.6"/><rect x="43.9" y="311.8" width="12.2" height="10.2" rx="3" fill="#fff"/><rect x="73.9" y="293.7" width="12.2" height="10.2" rx="3" fill="#fff"/><rect x="73.9" y="311.8" width="12.2" height="10.2" rx="3" fill="#fff"/><rect x="73.9" y="331.8" width="12.2" height="10.2" rx="3" fill="#fff"/><path d="M74 298.8 H65 V337 H74 M56 317 H74" fill="none" stroke="#fff" stroke-width="2.2"/><ellipse cx="66" cy="435.1" rx="10.8" ry="13.4" fill="#fff"/><path d="M45.5 448 Q45 446.6 47 446.2 L55 445.6 Q60 450.5 66 451 Q72 450.5 77 445.6 L85 446.2 Q87.5 446.6 87.5 449 L87.5 457 Q87.5 459.5 85 460.5 L68.5 467.2 Q66 468 63.5 467.2 L47.5 460.5 Q44.8 459.5 44.8 457 Z" fill="#fff"/><path d="M46.5 551.5 L52.5 552.8 Q54.5 553.5 55.5 556 L61.5 576.5" fill="none" stroke="#0bb5a0" stroke-width="3.6" stroke-linecap="round"/><path d="M57 559.7 H86 Q88.3 559.7 88 562 L86.3 574 Q85.8 577.2 82.5 577.2 H60.5 Z" fill="#0bb5a0"/><path d="M61.5 577 Q56 580.5 58 583 Q59 584.3 62 584.3 H87" fill="none" stroke="#0bb5a0" stroke-width="3.4"/><circle cx="61.5" cy="593.3" r="3.6" fill="#0bb5a0"/><circle cx="81" cy="593.3" r="3.6" fill="#0bb5a0"/><path d="M53.5 680.6 H69 L89.5 700 Q90.8 702 89.5 703.5 L74.5 718 Q72.8 719.6 71 718 L50.5 698.2 V683.6 Q50.5 680.6 53.5 680.6 Z" fill="#fff"/><circle cx="56.3" cy="686.2" r="2.5" fill="#213b45"/><path d="M46.6 699.2 L52.2 720 L43 717.2 Q41.6 716.6 42 715 Z" fill="#fff"/><path d="M51.5 704 L68.2 720.6 L58 723.2 Q56.8 723.3 56.5 722 Z" fill="#fff"/><rect x="42" y="806.0" width="44.2" height="6.0" rx="1" fill="#fff"/><rect x="42" y="818.0" width="44.2" height="6.3" rx="1" fill="#fff"/><rect x="42" y="830.0" width="44.2" height="6.0" rx="1" fill="#fff"/><circle cx="63" cy="825.2" r="19" fill="#213b45"/><circle cx="63" cy="825.2" r="15.3" fill="none" stroke="#fff" stroke-width="4.6"/><path d="M77.5 841 L86.5 850.5" stroke="#fff" stroke-width="5.4" stroke-linecap="round"/><path d="M57.5 828 L61.5 832 L69 824" fill="none" stroke="#fff" stroke-width="3.8"/><path d="M68.8 936.8 Q90 938 92.5 964.6" fill="none" stroke="#fff" stroke-width="6.6"/><path d="M56.2 936.4 L68.8 925.9 L68.8 947 Z" fill="#fff"/><path d="M37.4 948 Q36.5 974 61 975.9" fill="none" stroke="#fff" stroke-width="6.6"/><path d="M73.2 976.3 L61 965.7 L61 986.9 Z" fill="#fff"/><circle cx="50.9" cy="956.5" r="3.6" fill="#fff"/><circle cx="64.6" cy="956.5" r="3.6" fill="#fff"/><circle cx="78.5" cy="956.5" r="3.6" fill="#fff"/><rect x="60.1" y="1065.9" width="12" height="10" fill="#a0a0a0" transform="rotate(0.0 66.1 1089.9)"/><rect x="60.1" y="1065.9" width="12" height="10" fill="#a0a0a0" transform="rotate(-60.0 66.1 1089.9)"/><rect x="60.1" y="1065.9" width="12" height="10" fill="#a0a0a0" transform="rotate(-120.0 66.1 1089.9)"/><rect x="60.1" y="1065.9" width="12" height="10" fill="#a0a0a0" transform="rotate(-180.0 66.1 1089.9)"/><rect x="60.1" y="1065.9" width="12" height="10" fill="#a0a0a0" transform="rotate(-240.0 66.1 1089.9)"/><rect x="60.1" y="1065.9" width="12" height="10" fill="#a0a0a0" transform="rotate(-300.0 66.1 1089.9)"/><circle cx="66.1" cy="1089.9" r="15.2" fill="none" stroke="#a0a0a0" stroke-width="8"/><path d="M90 1193.7 Q72 1194 62.2 1203.5 H51 L42.3 1212.2 Q41.8 1214.5 44 1214.8 L49.5 1215.2 L52.4 1218.4 L50 1221.5 L61.7 1233.7 L65.4 1231.3 L68.5 1234.2 L68.8 1239.5 Q69.5 1241.8 71.5 1240.5 L79.8 1233.2 V1221.5 Q89 1208 90 1193.7 Z" fill="#fff"/><circle cx="74.9" cy="1208.9" r="4.7" fill="#213b45"/><path d="M49.5 1227 L56.8 1234.2 Q57.5 1238 53 1240 Q48 1242 42 1242 Q42 1236 44 1232 Q46.5 1227.5 49.5 1227 Z" fill="#fff"/></svg>
</body></html>
